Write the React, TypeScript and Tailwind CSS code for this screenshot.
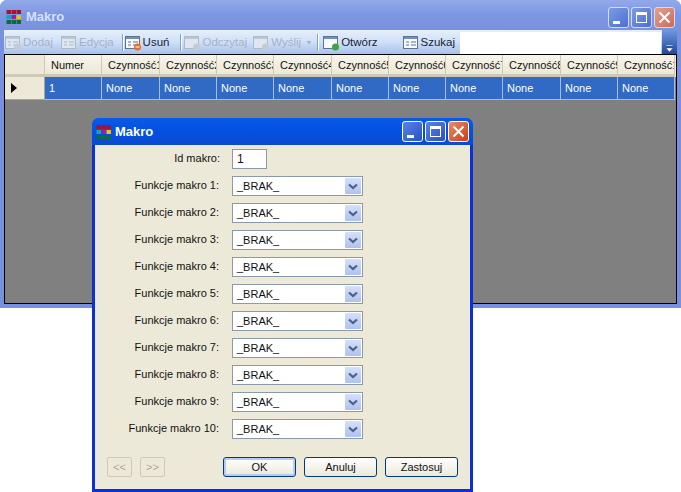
import React from "react";

const font = { fontFamily: '"Liberation Sans", Arial, sans-serif' };

function AppIcon() {
  const c = ["#a5122e", "#a5122e", "#a5122e", "#12a3b5", "#9a1fa8", "#e8c018", "#0e6a3a", "#0e6a3a", "#0e6a3a"];
  return (
    <svg width="16" height="14" viewBox="0 0 16 14" className="shrink-0">
      {c.map((f, i) => (
        <rect key={i} x={(i % 3) * 5 + 0.5} y={Math.floor(i / 3) * 5} width="4.5" height="4" fill={f} />
      ))}
    </svg>
  );
}

function TitleButtons({ dim }: { dim?: boolean }) {
  const blue = dim ? "bg-gradient-to-br from-[#7d9be6] to-[#4a6fd0]" : "bg-gradient-to-br from-[#5a84ea] to-[#2a4fc4]";
  const red = dim ? "bg-gradient-to-br from-[#e8a08c] to-[#c86a5c]" : "bg-gradient-to-br from-[#ea8a60] to-[#c83c18]";
  const bd = dim ? "border-[#d4dcf4]" : "border-white";
  return (
    <div className="flex gap-[2px]">
      <div className={`relative h-[21px] w-[21px] rounded-[3px] border ${bd} ${blue}`}>
        <div className="absolute left-[4px] top-[13px] h-[3px] w-[7px] bg-white" />
      </div>
      <div className={`relative h-[21px] w-[21px] rounded-[3px] border ${bd} ${blue}`}>
        <div className="absolute left-[4px] top-[4px] h-[11px] w-[11px] border border-t-[3px] border-white" />
      </div>
      <div className={`flex h-[21px] w-[21px] items-center justify-center rounded-[3px] border ${bd} ${red}`}>
        <svg width="13" height="13" viewBox="0 0 13 13">
          <path d="M1.5 1.5 L11.5 11.5 M11.5 1.5 L1.5 11.5" stroke="white" strokeWidth="2" />
        </svg>
      </div>
    </div>
  );
}

function ToolIcon({ kind, off, badge }: { kind: "list" | "win"; off?: boolean; badge?: string }) {
  const stroke = off ? "#aeb9c9" : "#5e7390";
  return (
    <svg width="17" height="16" viewBox="0 0 17 16" className="shrink-0">
      <rect x="0.5" y="1.5" width="14" height="12" fill={off ? "#dfe6ef" : "#f7f9fc"} stroke={stroke} />
      <rect x="1" y="2" width="13" height="2" fill={off ? "#bcc7d6" : "#6f8fbd"} />
      {kind === "list" && <path d="M3 7h3M3 10h3M8 7h5M8 10h5" stroke={stroke} strokeWidth="1" />}
      {badge && <circle cx="12.5" cy="12" r="3.5" fill={badge} />}
      {badge === "#e8702a" && <rect x="10.5" y="11.5" width="4" height="1" fill="white" />}
    </svg>
  );
}

function Tool({ label, kind, off, badge, className = "" }: { label: string; kind: "list" | "win"; off?: boolean; badge?: string; className?: string }) {
  return (
    <div className={`flex items-center gap-[1px] ${off ? "text-[#a6b2c4]" : "text-[#1a2230]"} ${className}`}>
      <ToolIcon kind={kind} off={off} badge={badge} />
      <span>{label}</span>
    </div>
  );
}

const Sep = () => <div className="h-[17px] w-[1px] bg-[#7f9fca] shadow-[1px_0_0_#fff]" />;

const heads = ["Numer", "Czynność1", "Czynność2", "Czynność3", "Czynność4", "Czynność5", "Czynność6", "Czynność7", "Czynność8", "Czynność9", "Czynność10"];
const gridCols = "40px 57px 58px 57px 57px 58px 57px 57px 57px 58px 57px 57px";

function Grid() {
  return (
    <div className="flex-1 border border-black bg-[#808080] text-[11px]">
      <div className="grid h-[22px] bg-[#ece9d8]" style={{ gridTemplateColumns: gridCols }}>
        <div className="border-b-[3px] border-r border-[#cdc9b4] bg-[#ece9d8]" />
        {heads.map((h) => (
          <div key={h} className="flex items-center overflow-hidden whitespace-nowrap border-b-[3px] border-r border-[#cdc9b4] bg-gradient-to-b from-[#f7f5ec] to-[#ece9d8] pl-[6px] pt-[2px] text-[#111]">
            {h}
          </div>
        ))}
      </div>
      <div className="grid h-[23px]" style={{ gridTemplateColumns: gridCols }}>
        <div className="flex items-center border-b border-r border-[#a8a594] bg-[#ece9d8] pl-[6px]">
          <svg width="6" height="10" viewBox="0 0 6 10"><path d="M0 0 L6 5 L0 10 Z" fill="#000" /></svg>
        </div>
        {["1", ...heads.slice(1).map(() => "None")].map((v, i) => (
          <div key={i} className="flex items-center border-b border-r border-[#a9bcd9] bg-[#316ac5] pl-[4px] text-white">
            {v}
          </div>
        ))}
      </div>
    </div>
  );
}

function Combo() {
  return (
    <div className="flex h-[20px] w-[131px] items-center border border-[#8c9aa8] bg-white pl-[4px] pr-[1px] text-[11px] text-[#111]">
      <span className="flex-1">_BRAK_</span>
      <div className="flex h-[16px] w-[16px] items-center justify-center rounded-[1px] bg-gradient-to-b from-[#d5e0fa] to-[#aec2f0]">
        <svg width="10" height="7" viewBox="0 0 10 7">
          <path d="M1 1.5 L5 5 L9 1.5" fill="none" stroke="#4d6185" strokeWidth="2.2" />
        </svg>
      </div>
    </div>
  );
}

function Btn({ label, def }: { label: string; def?: boolean }) {
  return (
    <div className={`flex h-[20px] w-[73px] items-center justify-center rounded-[3px] border border-[#003c74] bg-gradient-to-b from-white to-[#ece9d8] text-[11px] text-[#111] ${def ? "shadow-[inset_0_0_0_2px_#b4cdf0]" : ""}`}>
      {label}
    </div>
  );
}

function NavBtn({ label }: { label: string }) {
  return (
    <div className="flex h-[20px] w-[25px] items-center justify-center rounded-[2px] border border-[#cdcabb] bg-[#ece9d8] text-[11px] text-[#aca899]">
      {label}
    </div>
  );
}

function Dialog() {
  const nums = [1, 2, 3, 4, 5, 6, 7, 8, 9, 10];
  return (
    <div className="absolute left-[92px] top-[118px] flex h-[374px] w-[381px] flex-col rounded-t-[7px] bg-[#0831d9] shadow-[inset_0_1px_0_#3f7bf0]">
      <div className="flex h-[27px] shrink-0 items-center rounded-t-[7px] bg-gradient-to-b from-[#0a5ae8] via-[#0550e0] to-[#0a4ad0] pl-[4px] pr-[4px]">
        <AppIcon />
        <span className="ml-[3px] flex-1 pt-[1px] text-[13px] font-bold text-white">Makro</span>
        <TitleButtons />
      </div>
      <div className="mx-[3px] mb-[3px] flex flex-1 flex-col bg-[#ece9d8] pt-[4px] text-[#111]">
        <div className="flex h-[20px] items-center">
          <div className="w-[131px] pb-[1px] pr-[6px] text-right text-[11px]">Id makro:</div>
          <div className="ml-[6px] flex h-[20px] w-[35px] items-center border border-[#8c9aa8] bg-white pl-[4px] text-[12px]">1</div>
        </div>
        <div className="mt-[7px] flex flex-col gap-[7px]">
          {nums.map((n) => (
            <div key={n} className="flex items-center">
              <div className="w-[131px] whitespace-nowrap pb-[1px] pr-[7px] text-right text-[11px]">Funkcje makro {n}:</div>
              <div className="ml-[6px]"><Combo /></div>
            </div>
          ))}
        </div>
        <div className="mt-[18px] flex items-center pl-[12px]">
          <NavBtn label="<<" />
          <div className="w-[8px]" />
          <NavBtn label=">>" />
          <div className="w-[58px]" />
          <div className="flex gap-[8px]">
            <Btn label="OK" def />
            <Btn label="Anuluj" />
            <Btn label="Zastosuj" />
          </div>
        </div>
      </div>
    </div>
  );
}

export default function App() {
  return (
    <div className="relative h-[492px] w-[681px] overflow-hidden bg-white" style={font}>
      <div className="flex h-[308px] w-[681px] flex-col rounded-t-[7px] bg-[#7890e0]">
        <div className="flex h-[30px] shrink-0 items-center rounded-t-[7px] bg-gradient-to-b from-[#93a9ea] via-[#7c96e2] to-[#7a92de] pl-[6px] pr-[6px] pt-[4px]">
          <AppIcon />
          <span className="ml-[4px] flex-1 text-[13px] font-bold text-[#d6e0f7]">Makro</span>
          <TitleButtons dim />
        </div>
        <div className="mx-[4px] flex h-[24px] shrink-0 items-center bg-gradient-to-b from-[#e6effb] via-[#cfe0f7] to-[#a6c2eb] text-[11.5px]">
          <div className="flex flex-1 items-center pl-[1px] pt-[1px]">
            <Tool label="Dodaj" kind="list" off badge="#c3cbd8" />
            <Tool label="Edycja" kind="list" off className="ml-[8px]" />
            <div className="ml-[8px] mr-[2px]"><Sep /></div>
            <Tool label="Usuń" kind="list" badge="#e8702a" />
            <div className="ml-[11px] mr-[3px]"><Sep /></div>
            <Tool label="Odczytaj" kind="win" off badge="#c3cbd8" />
            <Tool label="Wyślij" kind="win" off badge="#c3cbd8" className="ml-[6px]" />
            <span className="ml-[6px] text-[8px] text-[#a6b2c4]">▾</span>
            <div className="ml-[6px] mr-[5px]"><Sep /></div>
            <Tool label="Otwórz" kind="win" badge="#3fa63f" />
            <Tool label="Szukaj" kind="list" className="ml-[25px]" />
            <div className="ml-[5px] h-[22px] w-[201px] bg-white" />
          </div>
          <div className="flex h-full w-[15px] items-end justify-center bg-gradient-to-b from-[#6f98e0] to-[#23489c] pb-[1px]">
            <svg width="9" height="8" viewBox="0 0 9 8"><path d="M1 0h7v1H1zM1 3h7L4.5 7z" fill="#fff" stroke="#111" strokeWidth="0.3" /></svg>
          </div>
        </div>
        <div className="mx-[4px] mb-[4px] flex flex-1"><Grid /></div>
      </div>
      <Dialog />
    </div>
  );
}
